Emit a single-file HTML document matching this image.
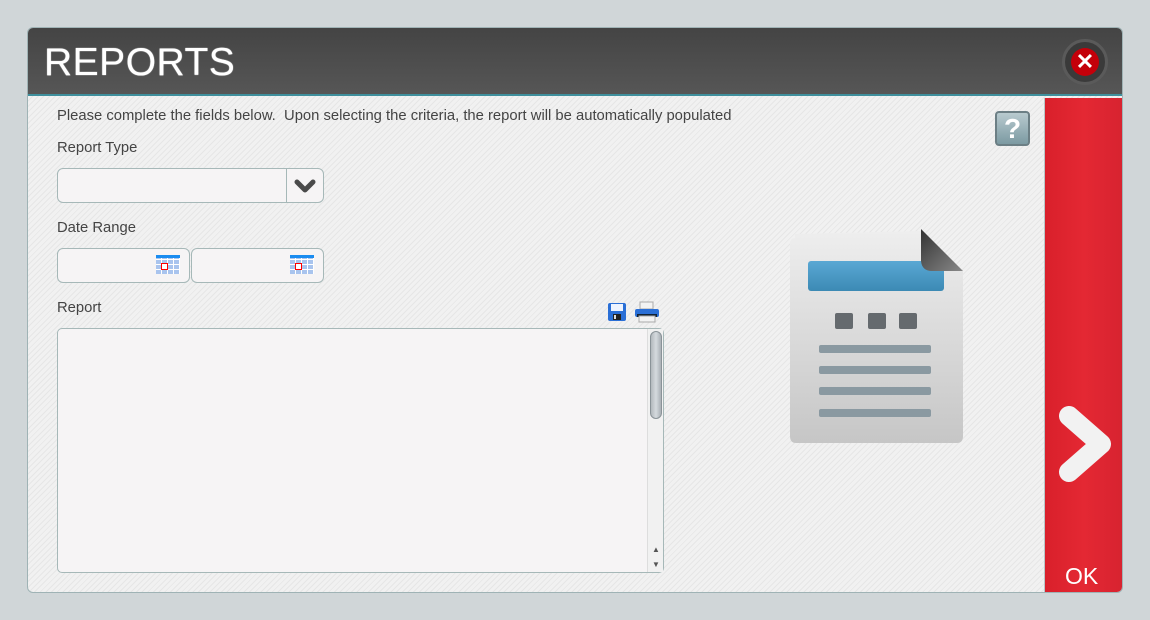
<!DOCTYPE html>
<html><head><style>
*{margin:0;padding:0;box-sizing:border-box}
body{width:1150px;height:620px;background:#d0d6d8;font-family:"Liberation Sans",Arial,sans-serif;position:relative;overflow:hidden}
.panel{position:absolute;left:27px;top:27px;width:1096px;height:566px;border:1px solid #9fb3b5;border-radius:6px;overflow:hidden;background:repeating-linear-gradient(135deg,#f1f1f1 0 3px,#e6e6e6 3px 4px)}
.hdr{position:absolute;left:0;top:0;width:100%;height:68px;background:linear-gradient(#444,#565656);border-bottom:2px solid #3f8f9c}
.hdr h1{position:absolute;left:16px;top:13px;color:#fff;font-size:39px;font-weight:normal;letter-spacing:0.5px;text-shadow:0 0 1px #fff}
.close{position:absolute;left:1034px;top:11px;width:46px;height:46px;border-radius:50%;background:#3a3a3a;border:3px solid #5a5a5a}
.close div{position:absolute;left:6px;top:6px;width:28px;height:28px;border-radius:50%;background:#c4000a;color:#fff;font-size:22px;font-weight:bold;text-align:center;line-height:28px}
.red{position:absolute;left:1016px;top:70px;width:79px;height:496px;background:linear-gradient(90deg,#d9202b,#e42833 50%,#d72330);border-left:1px solid #b9c6c8}
.ok{position:absolute;left:20px;bottom:4px;color:#fff;font-size:23px}
.t{position:absolute;color:#444;font-size:14.8px}
.box{position:absolute;background:#f6f4f5;border:1px solid #a6b8b8;border-radius:6px}
.help{position:absolute;left:967px;top:83px;width:35px;height:35px;border:2px solid #6c7f85;border-radius:4px;background:linear-gradient(#b8cacf,#7c9aa2);color:#fff;font-size:28px;font-weight:bold;text-align:center;line-height:31px}
.cal{position:absolute;width:24px;height:19px;background:repeating-linear-gradient(90deg,transparent 0 5px,#fff 5px 6px),repeating-linear-gradient(0deg,#a9c4ee 0 4px,#fff 4px 5px);border-top:3px solid #1a8cf0}
.cal i{position:absolute;left:5px;top:5px;width:7px;height:7px;border:1.5px solid #ff0000;background:#fff}
</style></head><body>
<div class="panel">
 <div class="hdr"><h1>REPORTS</h1><div class="close"><div>✕</div></div></div>
 <div class="t" style="left:29px;top:80px">Please complete the fields below.&nbsp; Upon selecting the criteria, the report will be automatically populated</div>
 <div class="help">?</div>
 <div class="t" style="left:29px;top:112px">Report Type</div>
 <div class="box" style="left:29px;top:140px;width:267px;height:35px"><div style="position:absolute;left:228px;top:0;width:1px;height:33px;background:#a6b8b8"></div>
  <svg style="position:absolute;left:236px;top:10px" width="22" height="14" viewBox="0 0 22 14"><path d="M3 3 L11 11 L19 3" stroke="#4a4a4a" stroke-width="5" fill="none" stroke-linecap="round" stroke-linejoin="round"/></svg></div>
 <div class="t" style="left:29px;top:192px">Date Range</div>
 <div class="box" style="left:29px;top:220px;width:133px;height:35px"><div class="cal" style="left:98px;top:6px"><i></i></div></div>
 <div class="box" style="left:163px;top:220px;width:133px;height:35px"><div class="cal" style="left:98px;top:6px"><i></i></div></div>
 <div class="t" style="left:29px;top:272px">Report</div>
 <svg style="position:absolute;left:579px;top:274px" width="20" height="20" viewBox="0 0 20 20"><rect x="1" y="1" width="18" height="18" rx="2" fill="#2a6fd6"/><rect x="4" y="2" width="12" height="7" fill="#eef4ff"/><rect x="6" y="12" width="8" height="6" fill="#222"/><rect x="7" y="13" width="2" height="4" fill="#ddd"/></svg>
 <svg style="position:absolute;left:606px;top:273px" width="26" height="22" viewBox="0 0 26 22"><rect x="6" y="1" width="13" height="7" fill="#f3f3f3" stroke="#aaa"/><rect x="1" y="8" width="24" height="8" rx="2" fill="#2a6fd6"/><rect x="3" y="13" width="20" height="3" fill="#123"/><rect x="5" y="15" width="16" height="6" fill="#f3f3f3" stroke="#aaa"/></svg>
 <div class="box" style="left:29px;top:300px;width:607px;height:245px;border-radius:5px">
  <div style="position:absolute;right:0;top:0;width:16px;height:243px;background:#f1f1f1;border-left:1px solid #ddd">
   <div style="position:absolute;left:2px;top:2px;width:12px;height:88px;border-radius:6px;background:linear-gradient(90deg,#b3b9bd,#d5dade,#a9b0b5);border:1px solid #8a9398"></div>
   <div style="position:absolute;left:4px;bottom:18px;font-size:8px;color:#555">▲</div>
   <div style="position:absolute;left:4px;bottom:3px;font-size:8px;color:#555">▼</div>
  </div>
 </div>
 <svg style="position:absolute;left:756px;top:197px" width="190" height="220" viewBox="0 0 190 220">
  <defs><linearGradient id="g" x1="0" y1="0" x2="0" y2="1"><stop offset="0" stop-color="#eeeeee"/><stop offset="1" stop-color="#c6c6c6"/></linearGradient>
  <linearGradient id="b" x1="0" y1="0" x2="0" y2="1"><stop offset="0" stop-color="#5aa8d4"/><stop offset="1" stop-color="#3c8ab4"/></linearGradient>
  <linearGradient id="f" x1="0" y1="0" x2="1" y2="1"><stop offset="0" stop-color="#333"/><stop offset="1" stop-color="#888"/></linearGradient></defs>
  <path d="M11 13 Q6 13 6 19 L6 211 Q6 218 12 218 L173 218 Q179 218 179 211 L179 46 L137 6 L11 9Z" fill="url(#g)"/>
  <rect x="24" y="36" width="136" height="30" rx="3" fill="url(#b)"/>
  <path d="M137 4 L179 46 L148 46 Q138 46 137 36 Z" fill="url(#f)"/>
  <rect x="51" y="88" width="18" height="16" rx="2" fill="#656a6e"/><rect x="84" y="88" width="18" height="16" rx="2" fill="#656a6e"/><rect x="115" y="88" width="18" height="16" rx="2" fill="#656a6e"/>
  <rect x="35" y="120" width="112" height="8" rx="2" fill="#8a99a1"/><rect x="35" y="141" width="112" height="8" rx="2" fill="#8a99a1"/><rect x="35" y="162" width="112" height="8" rx="2" fill="#8a99a1"/><rect x="35" y="184" width="112" height="8" rx="2" fill="#8a99a1"/>
 </svg>
 <div class="red">
  <svg style="position:absolute;left:10px;top:306px" width="60" height="82" viewBox="0 0 60 82"><path d="M14 12 L46 40 L14 68" stroke="#f2f2f2" stroke-width="20" fill="none" stroke-linecap="round" stroke-linejoin="round"/></svg>
  <div class="ok">OK</div>
 </div>
</div>
</body></html>
